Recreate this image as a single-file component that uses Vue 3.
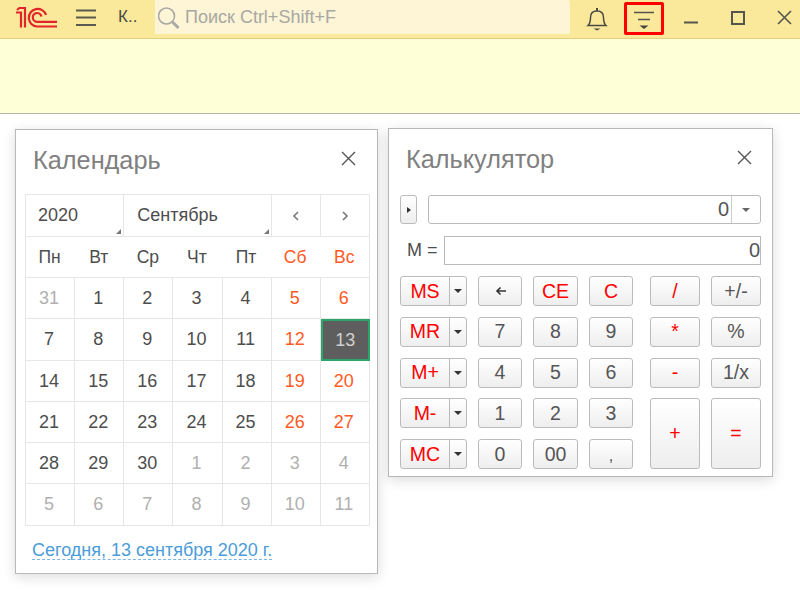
<script setup>
const weekdays = [
  { t: 'Пн' }, { t: 'Вт' }, { t: 'Ср' }, { t: 'Чт' }, { t: 'Пт' },
  { t: 'Сб', w: true }, { t: 'Вс', w: true }
]
const start = [31, 1, 2, 3, 4, 5, 6, 7, 8, 9, 10, 11, 12, 13, 14, 15, 16, 17, 18, 19, 20, 21, 22, 23, 24, 25, 26, 27, 28, 29, 30, 1, 2, 3, 4, 5, 6, 7, 8, 9, 10, 11]
const days = start.map((d, i) => ({
  d,
  off: i === 0 || i > 30,
  w: i % 7 > 4,
  sel: i === 13
}))
const memory = ['MS', 'MR', 'M+', 'M-', 'MC']
const digits = [
  { t: '', cls: 'back', arrow: true }, { t: 'CE', cls: 'red' }, { t: 'C', cls: 'red' },
  { t: '7' }, { t: '8' }, { t: '9' },
  { t: '4' }, { t: '5' }, { t: '6' },
  { t: '1' }, { t: '2' }, { t: '3' },
  { t: '0' }, { t: '00' }, { t: ',', cls: 'comma' }
]
const ops = [
  { t: '/', cls: 'red' }, { t: '+/-' },
  { t: '*', cls: 'red' }, { t: '%' },
  { t: '-', cls: 'red' }, { t: '1/x' },
  { t: '+', cls: 'red tall' }, { t: '=', cls: 'red tall' }
]
</script>

<template>
  <div class="page">
    <header class="topbar">
      <svg class="logo" width="42" height="21" viewBox="0 0 42 21" fill="none" stroke="#e2242b" stroke-width="2.200">
        <path d="M0 5.500H5V20.500M1 3L3.500 1H9V20.500" />
        <path d="M41 19.500H21A8.800 8.800 0 1 1 30 8" />
        <path d="M41 14.800H21A4.400 4.400 0 1 1 25.500 9.500" />
      </svg>
      <svg class="burger" width="20" height="18" viewBox="0 0 20 18" stroke="#5a5a50" stroke-width="2">
        <path d="M0 1.500H20M0 8.500H20M0 16H20" />
      </svg>
      <span class="crumb">К..</span>
      <div class="search">
        <svg width="24" height="26" viewBox="0 0 24 26" fill="none" stroke="#a9a9a4" stroke-width="1.600">
          <circle cx="8.500" cy="11" r="8" />
          <path d="M14.500 17L20.500 23" stroke-width="3" />
        </svg>
        <span>Поиск Ctrl+Shift+F</span>
      </div>
      <svg class="bell" width="22" height="24" viewBox="0 0 22 24" fill="none" stroke="#4a4a44" stroke-width="1.500">
        <path d="M2 18.500C4.500 16 4.500 14 4.500 10.500C4.500 6.500 7 4 11 4C15 4 17.500 6.500 17.500 10.500C17.500 14 17.500 16 20 18.500Z" />
        <path d="M11 1V4" stroke-width="2" />
        <path d="M7.500 21.500H14.500L11 23.500Z" fill="#4a4a44" stroke="none" />
      </svg>
      <div class="filter">
        <svg width="22" height="22" viewBox="0 0 22 22" stroke="#55554c" stroke-width="1.500">
          <path d="M1 2.500H21M5 9.500H17" />
          <path d="M6.500 15.500H15.500L11 19Z" fill="#44443c" stroke="none" />
        </svg>
      </div>
      <svg class="win-min" width="14" height="3" viewBox="0 0 14 3" stroke="#55554c" stroke-width="2">
        <path d="M0 1.500H14" />
      </svg>
      <svg class="win-max" width="14" height="14" viewBox="0 0 14 14" fill="none" stroke="#55554c" stroke-width="2">
        <rect x="1" y="1" width="12" height="12" />
      </svg>
      <svg class="win-close" width="15" height="15" viewBox="0 0 15 15" stroke="#55554c" stroke-width="1.600">
        <path d="M1 1L14 14M14 1L1 14" />
      </svg>
    </header>
    <div class="notice"></div>

    <main class="desk">
      <section class="panel cal">
        <div class="head">
          <h2>Календарь</h2>
          <svg width="15" height="15" viewBox="0 0 15 15" stroke="#555" stroke-width="1.400">
            <path d="M1 1L14 14M14 1L1 14" />
          </svg>
        </div>
        <div class="cal-grid">
          <div class="cell sel-box year">2020<i class="corner"></i></div>
          <div class="cell sel-box month">Сентябрь<i class="corner"></i></div>
          <div class="cell nav">
            <svg width="8" height="10" viewBox="0 0 8 10" fill="none" stroke="#777" stroke-width="1.600"><path d="M6 1L2 5L6 9" /></svg>
          </div>
          <div class="cell nav">
            <svg width="8" height="10" viewBox="0 0 8 10" fill="none" stroke="#777" stroke-width="1.600"><path d="M2 1L6 5L2 9" /></svg>
          </div>
          <div class="weekdays">
            <span v-for="w in weekdays" :key="w.t" :class="{ weekend: w.w }">{{ w.t }}</span>
          </div>
          <div
            v-for="(c, i) in days"
            :key="i"
            class="cell day"
            :class="{ off: c.off, weekend: c.w && !c.off, sel: c.sel }"
          >
            <span>{{ c.d }}</span>
          </div>
        </div>
        <a class="today">Сегодня, 13 сентября 2020 г.</a>
      </section>

      <section class="panel calc">
        <div class="head">
          <h2>Калькулятор</h2>
          <svg width="15" height="15" viewBox="0 0 15 15" stroke="#555" stroke-width="1.400">
            <path d="M1 1L14 14M14 1L1 14" />
          </svg>
        </div>
        <div class="display-row">
          <button class="btn toggle"><i class="tri-r"></i></button>
          <div class="display">
            <span class="val">0</span>
            <span class="drop"><i class="tri-d"></i></span>
          </div>
        </div>
        <div class="memory-row">
          <label>M =</label>
          <div class="mem-val">0</div>
        </div>
        <div class="keys">
          <div class="col-mem">
            <div v-for="m in memory" :key="m" class="split">
              <button class="btn red main">{{ m }}</button>
              <button class="btn more"><i class="tri-d dark"></i></button>
            </div>
          </div>
          <div class="col-dig">
            <button v-for="(k, i) in digits" :key="i" class="btn" :class="k.cls">
              <svg v-if="k.arrow" width="11" height="10" viewBox="0 0 11 10" fill="none" stroke="#333" stroke-width="1.600">
                <path d="M11 5H2M5.500 1.500L2 5L5.500 8.500" />
              </svg>
              <template v-else>{{ k.t }}</template>
            </button>
          </div>
          <div class="col-ops">
            <button v-for="k in ops" :key="k.t" class="btn" :class="k.cls">{{ k.t }}</button>
          </div>
        </div>
      </section>
    </main>
  </div>
</template>

<style>
html, body { margin: 0; background: #fff; }
</style>

<style scoped>
.page {
  width: 800px;
  height: 592px;
  overflow: hidden;
  background: #fff;
  font-family: "Liberation Sans", Arial, sans-serif;
  color: #4d4d4d;
}
.topbar {
  height: 38px;
  display: flex;
  align-items: flex-start;
  background: #fbe99b;
  border-bottom: 1px solid #e3d07e;
}
.logo { margin: 7px 0 0 16px; flex: none; }
.burger { margin: 9px 0 0 18px; flex: none; }
.crumb { margin: 7px 0 0 22px; width: 37px; font-size: 17px; line-height: 20px; color: #4a4a44; flex: none; }
.search {
  width: 415px;
  height: 34px;
  flex: none;
  display: flex;
  align-items: center;
  gap: 3px;
  padding-left: 3px;
  box-sizing: border-box;
  background: #fdf5d6;
  border-radius: 0 2px 2px 0;
  font-size: 18px;
  color: #a8a8a2;
}
.search svg { margin-top: 2px; }
.bell { margin: 7px 0 0 16px; flex: none; }
.filter {
  margin: 2px 0 0 16px;
  width: 40px;
  height: 33px;
  flex: none;
  box-sizing: border-box;
  border: 3px solid #ff0000;
  border-radius: 2px;
  display: flex;
  justify-content: center;
  padding-top: 5px;
}
.win-min { margin: 21px 0 0 20px; flex: none; }
.win-max { margin: 11px 0 0 33px; flex: none; }
.win-close { margin: 10px 0 0 32px; flex: none; }
.notice {
  height: 74px;
  background: #ffffd7;
  border-bottom: 1px solid #b5b5ab;
}
.desk {
  display: flex;
  align-items: flex-start;
  gap: 10px;
  padding: 14px 0 0 15px;
}
.panel {
  box-sizing: border-box;
  background: #fff;
  border: 1px solid #b8b8b8;
  box-shadow: 0 3px 12px rgba(0, 0, 0, 0.14);
}
.head {
  display: flex;
  justify-content: space-between;
  align-items: center;
}
h2 {
  margin: 0;
  font-weight: 400;
  font-size: 25.300px;
  line-height: 30px;
  color: #808080;
}
.cal {
  width: 363px;
  height: 445px;
  margin-top: 1px;
  padding: 15px 8px 0 9px;
}
.cal .head { padding: 0 13px 0 8px; height: 30px; }
.cal .head svg { margin-top: -3px; }
.cal-grid {
  margin-top: 19px;
  width: 345px;
  display: grid;
  grid-template-columns: repeat(7, 49.140px);
  grid-template-rows: 42px 41px 41px 42px 41px 41px 41px 42px;
  border-top: 1px solid #e6e6e6;
  border-left: 1px solid #e6e6e6;
  box-sizing: border-box;
  height: 332px;
}
.cell {
  box-sizing: border-box;
  border-right: 1px solid #e6e6e6;
  border-bottom: 1px solid #e6e6e6;
  display: flex;
  align-items: center;
  justify-content: center;
  font-size: 18px;
  position: relative;
}
.day { padding-right: 2px; }
.sel-box { justify-content: flex-start; }
.year { grid-column: span 2; padding-left: 12px; }
.month { grid-column: span 3; padding-left: 13px; }
.corner {
  position: absolute;
  right: 2px;
  bottom: 2px;
  width: 0;
  height: 0;
  border-left: 5px solid transparent;
  border-bottom: 5px solid #777;
}
.weekdays {
  grid-column: 1 / -1;
  display: grid;
  grid-template-columns: repeat(7, 49.140px);
  align-items: center;
  text-align: center;
  font-size: 17.500px;
  border-right: 1px solid #e6e6e6;
  border-bottom: 1px solid #e6e6e6;
}
.weekdays span { padding-right: 2px; }
.weekend { color: #ff5a1f; }
.off { color: #b0b0b0; }
.sel {
  background: #5e5e5e;
  color: #d0d0d0;
  border: 1px solid #d0d0d0;
  outline: 2px solid #2aa66b;
  outline-offset: -2px;
  padding-right: 0;
}
.today {
  display: inline-block;
  margin: 15px 0 0 7px;
  font-size: 18px;
  line-height: 18px;
  color: #4b9cd9;
  border-bottom: 1px dashed #7bb6e3;
}
.calc {
  width: 385px;
  height: 349px;
  padding: 15px 11px 0 11px;
}
.calc .head { padding: 0 9px 0 6px; height: 30px; }
.calc .head svg { margin-top: -3px; }
.display-row {
  margin-top: 21px;
  display: flex;
  gap: 11px;
}
.btn {
  box-sizing: border-box;
  margin: 0;
  padding: 0;
  border: 1px solid #bbb;
  border-radius: 3px;
  background: linear-gradient(#ffffff, #eeeeee);
  font-family: inherit;
  font-size: 19.500px;
  color: #555;
  display: flex;
  align-items: center;
  justify-content: center;
}
.red { color: #ff0000; }
.toggle { width: 17px; height: 29px; }
.tri-r {
  width: 0;
  height: 0;
  border-top: 3px solid transparent;
  border-bottom: 3px solid transparent;
  border-left: 4px solid #333;
}
.tri-d {
  width: 0;
  height: 0;
  border-left: 4px solid transparent;
  border-right: 4px solid transparent;
  border-top: 4px solid #666;
}
.tri-d.dark { border-top-color: #333; }
.display {
  flex: 1;
  height: 29px;
  box-sizing: border-box;
  border: 1px solid #bbb;
  border-radius: 3px;
  display: flex;
  font-size: 20px;
}
.val {
  flex: 1;
  text-align: right;
  padding-right: 2px;
  line-height: 27px;
  color: #555;
}
.drop {
  width: 28px;
  border-left: 1px solid #ccc;
  display: flex;
  align-items: center;
  justify-content: center;
}
.memory-row {
  margin-top: 12px;
  display: flex;
  align-items: center;
}
.memory-row label {
  width: 44px;
  padding-left: 7px;
  box-sizing: border-box;
  font-size: 18px;
}
.mem-val {
  flex: 1;
  height: 29px;
  box-sizing: border-box;
  border: 1px solid #bbb;
  text-align: right;
  font-size: 20px;
  line-height: 27px;
  color: #555;
}
.keys {
  margin-top: 11px;
  display: flex;
}
.col-mem, .col-dig, .col-ops {
  display: grid;
  grid-template-rows: repeat(5, 30px);
  row-gap: 10.750px;
}
.col-mem { width: 67px; }
.split { display: flex; }
.split .main { width: 50px; border-radius: 3px 0 0 3px; }
.split .more { width: 18px; margin-left: -1px; border-radius: 0 3px 3px 0; }
.col-dig {
  margin-left: 11px;
  grid-template-columns: 44px 45px 44px;
  column-gap: 11px;
}
.col-ops {
  margin-left: 17px;
  grid-template-columns: 50px 50px;
  column-gap: 11px;
}
.tall { grid-row: 4 / span 2; }
.comma { align-items: flex-end; padding-bottom: 3px; font-size: 16px; }
</style>
